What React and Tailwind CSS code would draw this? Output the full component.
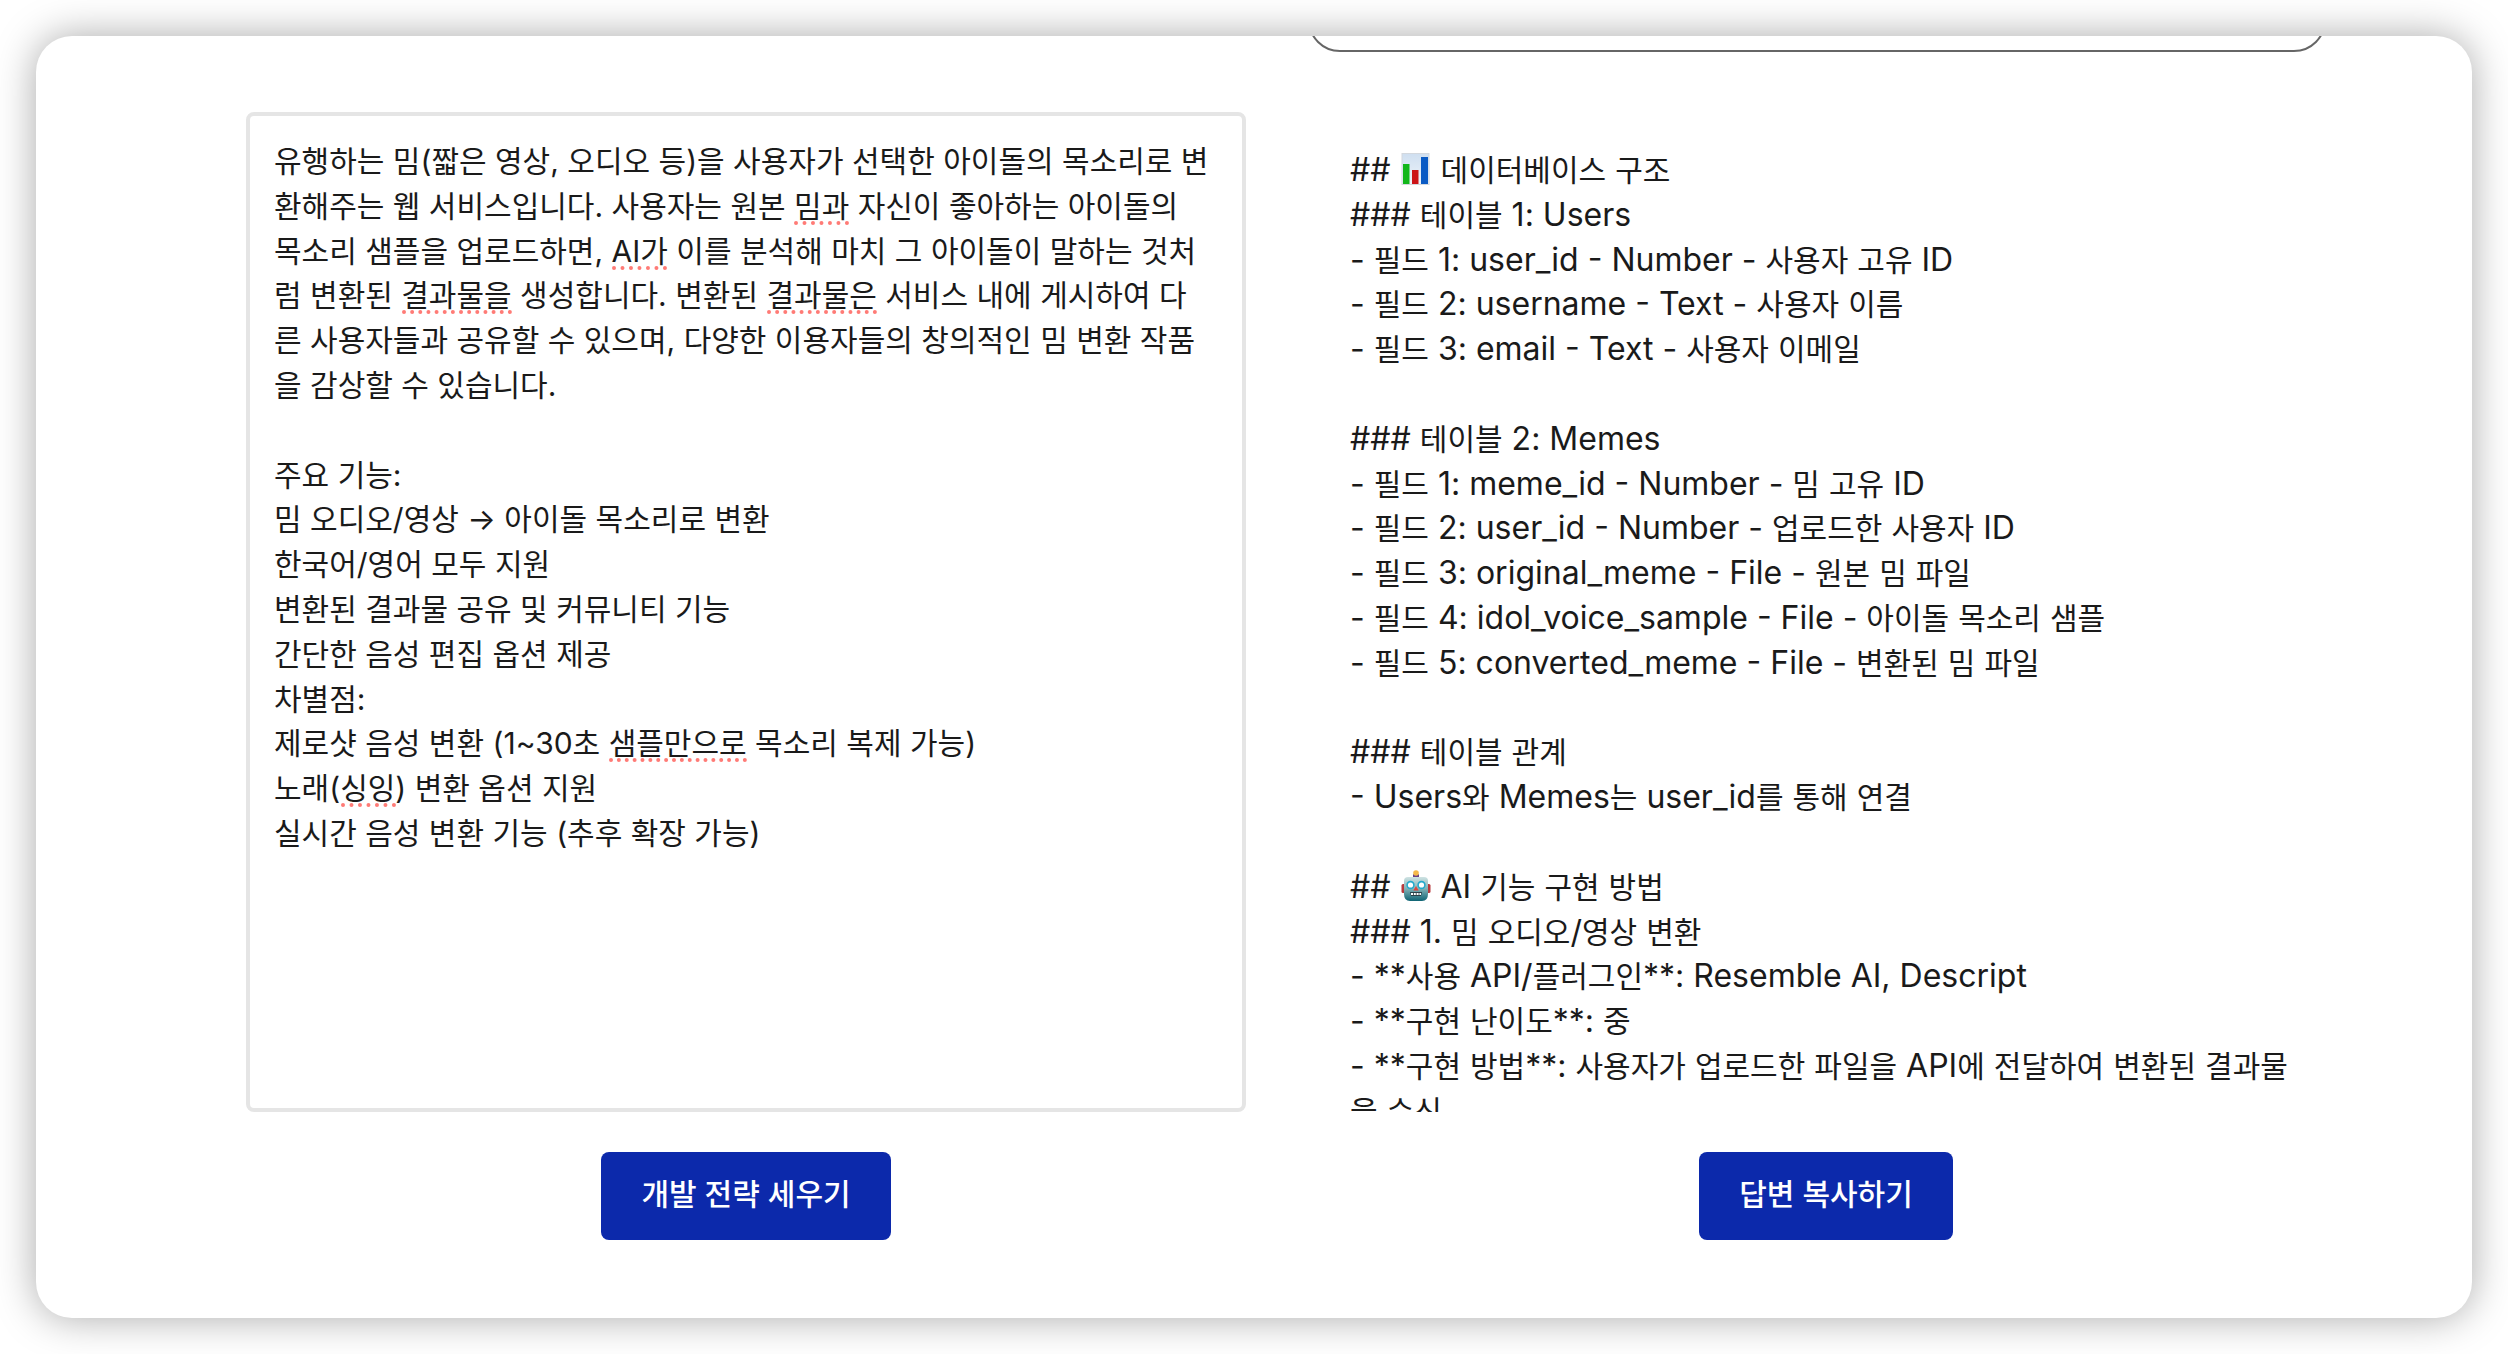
import React, { useState } from 'react';

const IDEA_TEXT = `유행하는 밈(짧은 영상, 오디오 등)을 사용자가 선택한 아이돌의 목소리로 변환해주는 웹 서비스입니다. 사용자는 원본 밈과 자신이 좋아하는 아이돌의 목소리 샘플을 업로드하면, AI가 이를 분석해 마치 그 아이돌이 말하는 것처럼 변환된 결과물을 생성합니다. 변환된 결과물은 서비스 내에 게시하여 다른 사용자들과 공유할 수 있으며, 다양한 이용자들의 창의적인 밈 변환 작품을 감상할 수 있습니다.

주요 기능:
밈 오디오/영상 → 아이돌 목소리로 변환
한국어/영어 모두 지원
변환된 결과물 공유 및 커뮤니티 기능
간단한 음성 편집 옵션 제공
차별점:
제로샷 음성 변환 (1~30초 샘플만으로 목소리 복제 가능)
노래(싱잉) 변환 옵션 지원
실시간 음성 변환 기능 (추후 확장 가능)`;

const ANSWER_LINES = [
  '## 📊 데이터베이스 구조',
  '### 테이블 1: Users',
  '- 필드 1: user_id - Number - 사용자 고유 ID',
  '- 필드 2: username - Text - 사용자 이름',
  '- 필드 3: email - Text - 사용자 이메일',
  '',
  '### 테이블 2: Memes',
  '- 필드 1: meme_id - Number - 밈 고유 ID',
  '- 필드 2: user_id - Number - 업로드한 사용자 ID',
  '- 필드 3: original_meme - File - 원본 밈 파일',
  '- 필드 4: idol_voice_sample - File - 아이돌 목소리 샘플',
  '- 필드 5: converted_meme - File - 변환된 밈 파일',
  '',
  '### 테이블 관계',
  '- Users와 Memes는 user_id를 통해 연결',
  '',
  '## 🤖 AI 기능 구현 방법',
  '### 1. 밈 오디오/영상 변환',
  '- **사용 API/플러그인**: Resemble AI, Descript',
  '- **구현 난이도**: 중',
  '- **구현 방법**: 사용자가 업로드한 파일을 API에 전달하여 변환된 결과물을 수신',
];

const LINE_RATIO = 1.4;

// Spell check marks: text row, distance from the text's left edge, length
const SPELLING_MARKS = [
  { row: 1, left: 520, width: 55 },
  { row: 2, left: 338, width: 55 },
  { row: 3, left: 128, width: 110 },
  { row: 3, left: 493, width: 110 },
  { row: 13, left: 335, width: 138 },
  { row: 14, left: 67, width: 55 },
];

function ChartIcon() {
  return (
    <svg viewBox="0 0 32 32" className="inline-block size-8 align-[-4px]" role="img" aria-label="📊">
      <defs>
        <linearGradient id="chart-bg" x1="0" y1="0" x2="0" y2="1">
          <stop offset="0" stopColor="#cfdff0" />
          <stop offset="1" stopColor="#eef4fa" />
        </linearGradient>
      </defs>
      <rect x="2" y="0.5" width="27" height="31" fill="url(#chart-bg)" stroke="#d3d8de" strokeWidth="1" />
      <rect x="3" y="11" width="6.5" height="20" fill="#12b71a" />
      <rect x="12" y="17" width="6.5" height="14" fill="#cc1417" />
      <rect x="21" y="4" width="7" height="27" fill="#0b5bc4" />
    </svg>
  );
}

function RobotIcon() {
  return (
    <svg viewBox="0 0 32 32" className="inline-block size-8 align-[-4px]" role="img" aria-label="🤖">
      <defs>
        <linearGradient id="robot-face" x1="0" y1="0" x2="0" y2="1">
          <stop offset="0" stopColor="#cfe3e3" />
          <stop offset="0.5" stopColor="#7fb0b5" />
          <stop offset="1" stopColor="#0f6474" />
        </linearGradient>
      </defs>
      <rect x="1.5" y="14" width="4" height="9" rx="1.5" fill="#b8383c" />
      <rect x="26.5" y="14" width="4" height="9" rx="1.5" fill="#b8383c" />
      <rect x="13" y="4" width="6" height="4" rx="1" fill="#6a3f86" />
      <circle cx="16" cy="3" r="2.8" fill="#f5b84a" />
      <path d="M8 7h16q4 0 4 4v13q0 7-6 7H10q-6 0-6-7V11q0-4 4-4z" fill="url(#robot-face)" />
      <circle cx="10.5" cy="15" r="4.2" fill="#25a9cc" />
      <circle cx="21.5" cy="15" r="4.2" fill="#25a9cc" />
      <circle cx="10.5" cy="15" r="2.6" fill="#fff" />
      <circle cx="21.5" cy="15" r="2.6" fill="#fff" />
      <path d="M16 16l2.6 4.6h-5.2z" fill="#e0453c" />
      <path d="M10 22h12l-1 4H11z" fill="#2b4148" />
      <path d="M11 24h10" stroke="#fff" strokeWidth="2" strokeDasharray="2 0.8" />
    </svg>
  );
}

// Hangul is set a step smaller than the latin text next to it
function MixedText({ text }) {
  return text.split(/([가-힣]+|📊|🤖)/u).map((part, i) => {
    if (part === '📊') return <ChartIcon key={i} />;
    if (part === '🤖') return <RobotIcon key={i} />;
    if (/[가-힣]/.test(part)) return <span key={i} className="text-[30px]">{part}</span>;
    return part;
  });
}

function ActionButton({ children, onClick }) {
  return (
    <button
      type="button"
      onClick={onClick}
      className="h-[88px] cursor-pointer rounded-lg bg-[#0c29ab] px-10 pb-1 text-[30px] font-medium text-white hover:bg-[#0a2290]"
    >
      {children}
    </button>
  );
}

function IdeaEditor({ value, onChange }) {
  return (
    <div className="relative h-[1000px] w-full">
      <textarea
        aria-label="서비스 아이디어"
        spellCheck={false}
        value={value}
        onChange={(e) => onChange(e.target.value)}
        className="block size-full resize-none rounded-lg border-4 border-[#e5e5e5] bg-white pt-[23px] pr-[30px] pb-6 pl-6 text-[30px] break-all whitespace-pre-wrap outline-none"
      />
      {value === IDEA_TEXT && (
        <div aria-hidden="true" className="pointer-events-none absolute top-16 left-7">
          {SPELLING_MARKS.map(({ row, left, width }) => (
            <span
              key={`${row}-${left}`}
              className="absolute border-b-4 border-dotted border-[#ff7b76]"
              style={{ top: `${row * LINE_RATIO}em`, left, width }}
            />
          ))}
        </div>
      )}
    </div>
  );
}

export default function App() {
  const [idea, setIdea] = useState(IDEA_TEXT);

  const copyAnswer = () => navigator.clipboard?.writeText(ANSWER_LINES.join('\n'));

  return (
    <div className="bg-white p-9 font-['Inter','Noto_Sans_CJK_KR',sans-serif] text-[32px] leading-[140%] text-[#1a1a1a]">
      <main className="overflow-hidden rounded-[36px] bg-white pr-[146px] pb-[78px] pl-[210px] shadow-[0_0_40px_rgba(0,0,0,0.34)]">
        {/* Lower edge of the card scrolled out above */}
        <div className="grid grid-cols-2 gap-20">
          <div className="col-start-2 -ml-[18px] h-4 overflow-hidden">
            <div className="-mt-12 h-16 rounded-[32px] border-2 border-[#666]" />
          </div>
        </div>

        <div className="grid grid-cols-2 gap-20 pt-[60px]">
          <section className="flex min-w-0 flex-col items-center gap-10">
            <IdeaEditor value={idea} onChange={setIdea} />
            <ActionButton>개발 전략 세우기</ActionButton>
          </section>

          <section className="flex min-w-0 flex-col items-center gap-10">
            <div className="h-[1000px] w-full overflow-hidden px-6 pt-9 break-all">
              {ANSWER_LINES.map((line, i) => (
                <p key={i} className="min-h-[1lh]">
                  <MixedText text={line} />
                </p>
              ))}
            </div>
            <ActionButton onClick={copyAnswer}>답변 복사하기</ActionButton>
          </section>
        </div>
      </main>
    </div>
  );
}
